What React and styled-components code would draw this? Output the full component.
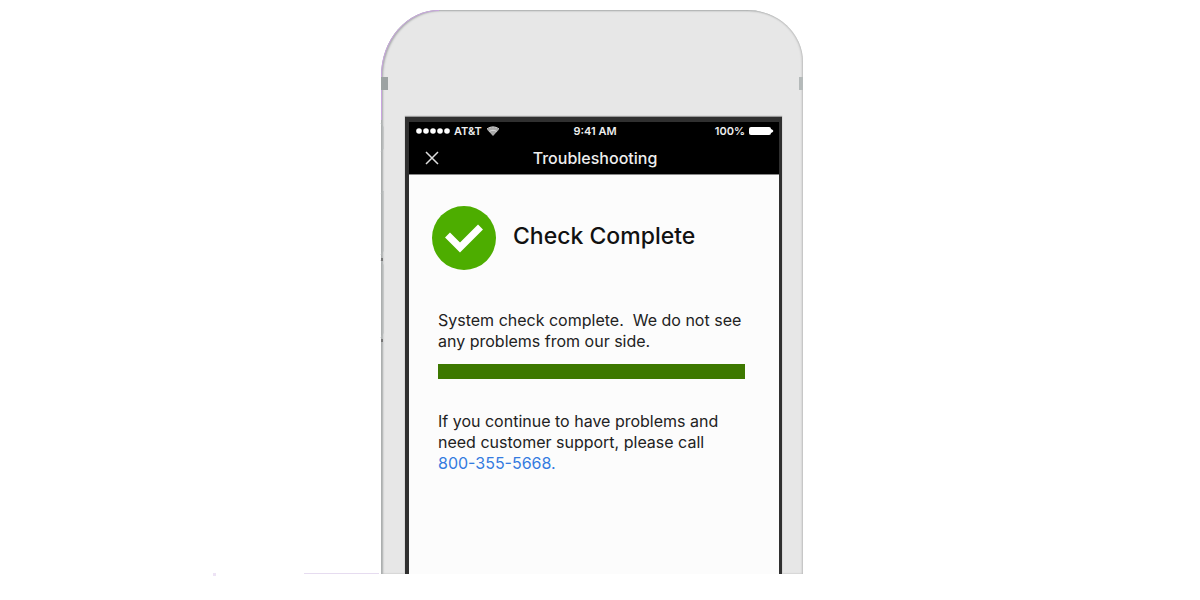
import React from "react";
import styled, { createGlobalStyle } from "styled-components";

const GlobalStyle = createGlobalStyle`
  * { box-sizing: border-box; }
  body {
    margin: 0;
    background: #fff;
    font-family: Inter, "Liberation Sans", sans-serif;
    color: #222;
  }
`;

const Page = styled.main`
  display: grid;
  grid-template-columns: 1fr minmax(0, 422px) 1fr;
  padding: 10px 16px 24px 0;
`;

const Surface = styled.div`
  display: flex;
  justify-content: flex-end;
  align-items: flex-end;
  gap: 88px;
  padding: 0 2px 0 0;
`;

const Speck = styled.span`
  width: 3px;
  height: 3px;
  background: #ede3f5;
`;

const SurfaceLine = styled.span`
  width: 75px;
  height: 1px;
  margin-bottom: 2px;
  background: #e6dcf0;
`;

const Phone = styled.section`
  position: relative;
  margin-bottom: 2px;
  padding: 107px 21px 0 24px;
  border-radius: 58px 56px 0 0 / 66px 52px 0 0;
  background: #e7e7e7;
  box-shadow: inset 2px 1px 2px #a9acac, inset -1px 0 2px #bbb;
`;

const EdgeDrawing = styled.svg`
  position: absolute;
  top: 0;
  left: 0;
  width: 10px;
  height: 340px;
  overflow: visible;
`;

const Antenna = styled.span`
  position: absolute;
  top: 67px;
  ${({ $side }) => $side}: 0;
  width: ${({ $side }) => ($side === "left" ? 7 : 4)}px;
  height: 13px;
  background: ${({ $side }) => ($side === "left" ? "#9da3a3" : "#b5baba")};
`;

const Screen = styled.div`
  min-height: 457px;
  border: solid #303030;
  border-width: 5px 3px 0 4px;
  background: #fcfcfc;
  box-shadow: 0 -1px 1px #999;
`;

const Header = styled.header`
  height: 53px;
  padding: 0 5px 0 7px;
  background: #000;
  border-bottom: 1px solid #888;
  color: #eee;
`;

const StatusBar = styled.div`
  display: grid;
  grid-template-columns: 1fr auto 1fr;
  align-items: center;
  height: 18px;
  font-size: 11px;
  line-height: 16px;
  font-weight: 600;
`;

const StatusGroup = styled.div`
  display: flex;
  align-items: center;
  gap: 4px;
  justify-content: ${({ $end }) => ($end ? "flex-end" : "flex-start")};
`;

const TitleBar = styled.div`
  display: grid;
  grid-template-columns: 32px 1fr 32px;
  align-items: center;
  height: 36px;
`;

const CloseButton = styled.button`
  display: flex;
  justify-content: center;
  padding: 0;
  border: 0;
  background: none;
  color: #ddd;
`;

const Title = styled.h1`
  margin: 0;
  text-align: center;
  font-size: 16px;
  line-height: 20px;
  font-weight: 500;
`;

const Content = styled.div`
  padding: 31px 34px 0 29px;
`;

const Result = styled.div`
  display: flex;
  align-items: center;
  gap: 17px;
  margin-left: -6px;
`;

const ResultTitle = styled.h2`
  margin: 0 0 4px;
  color: #111;
  font-size: 23px;
  line-height: 28px;
  font-weight: 500;
  white-space: nowrap;
`;

const Message = styled.p`
  margin: ${({ $top }) => $top}px 0 0;
  font-size: 16px;
  line-height: 21px;
`;

const Progress = styled.div`
  height: 15px;
  margin-top: 12px;
  background: #3d7800;
`;

const PhoneLink = styled.a`
  display: block;
  width: fit-content;
  color: #347be0;
  text-decoration: none;
  white-space: nowrap;
`;

export default function App() {
  return (
    <>
      <GlobalStyle />
      <Page>
        <Surface>
          <Speck />
          <SurfaceLine />
        </Surface>
        <Phone>
          <EdgeDrawing viewBox="0 0 10 340" fill="none" aria-hidden="true">
            <path d="M.5 110V66C.5 30 26 .5 58 .5" stroke="#c9a5e0" />
            <path d="M0 113l2 4v22l-2 3M0 184l2-3v60l-2 4M0 250l2 5v68l-2 5" stroke="#b5b9b9" />
            <path d="M1 248v3M1 329v3" stroke="#777" strokeWidth="2" />
          </EdgeDrawing>
          <Antenna $side="left" />
          <Antenna $side="right" />
          <Screen>
            <Header>
              <StatusBar>
                <StatusGroup>
                  <svg width="34" height="6" viewBox="0 0 34 6" fill="#fff" aria-hidden="true">
                    {[3, 10, 17, 24, 31].map((x) => (
                      <circle key={x} cx={x} cy="3" r="2.8" />
                    ))}
                  </svg>
                  <span>AT&amp;T</span>
                  <svg width="14" height="10" viewBox="0 0 14 10" aria-hidden="true">
                    <path d="M1 3.5C4.5.2 9.5.2 13 3.5L7 10z" fill="#aaa" />
                    <path d="M1 3C4.5.2 9.5.2 13 3M3.5 5.5c2-1.6 5-1.6 7 0" fill="none" stroke="#ddd" />
                  </svg>
                </StatusGroup>
                <span>9:41 AM</span>
                <StatusGroup $end>
                  <span>100%</span>
                  <svg width="25" height="10" viewBox="0 0 25 10" fill="#fff" aria-hidden="true">
                    <rect x="0" y="1" width="22" height="8" rx="2" />
                    <path d="M22 3c3 1 3 3 0 4z" />
                  </svg>
                </StatusGroup>
              </StatusBar>
              <TitleBar>
                <CloseButton aria-label="Close">
                  <svg width="14" height="14" viewBox="0 0 14 14" aria-hidden="true">
                    <path d="M1 1l12 12M13 1L1 13" stroke="currentColor" strokeWidth="1.5" />
                  </svg>
                </CloseButton>
                <Title>Troubleshooting</Title>
              </TitleBar>
            </Header>
            <Content>
              <Result>
                <svg width="64" height="64" viewBox="0 0 64 64" aria-hidden="true">
                  <circle cx="32" cy="32" r="32" fill="#4dad00" />
                  <path d="M15.500 29L28 41.500L48.500 21" fill="none" stroke="#fff" strokeWidth="7" strokeLinejoin="miter" />
                </svg>
                <ResultTitle>Check Complete</ResultTitle>
              </Result>
              <Message $top={40}>{"System check complete.\u00a0 We do not see any problems from our side."}</Message>
              <Progress role="progressbar" aria-label="System check" aria-valuenow={100} />
              <Message $top={32}>
                If you continue to have problems and need customer support, please call
                <PhoneLink href="tel:8003555668">800-355-5668.</PhoneLink>
              </Message>
            </Content>
          </Screen>
        </Phone>
      </Page>
    </>
  );
}
